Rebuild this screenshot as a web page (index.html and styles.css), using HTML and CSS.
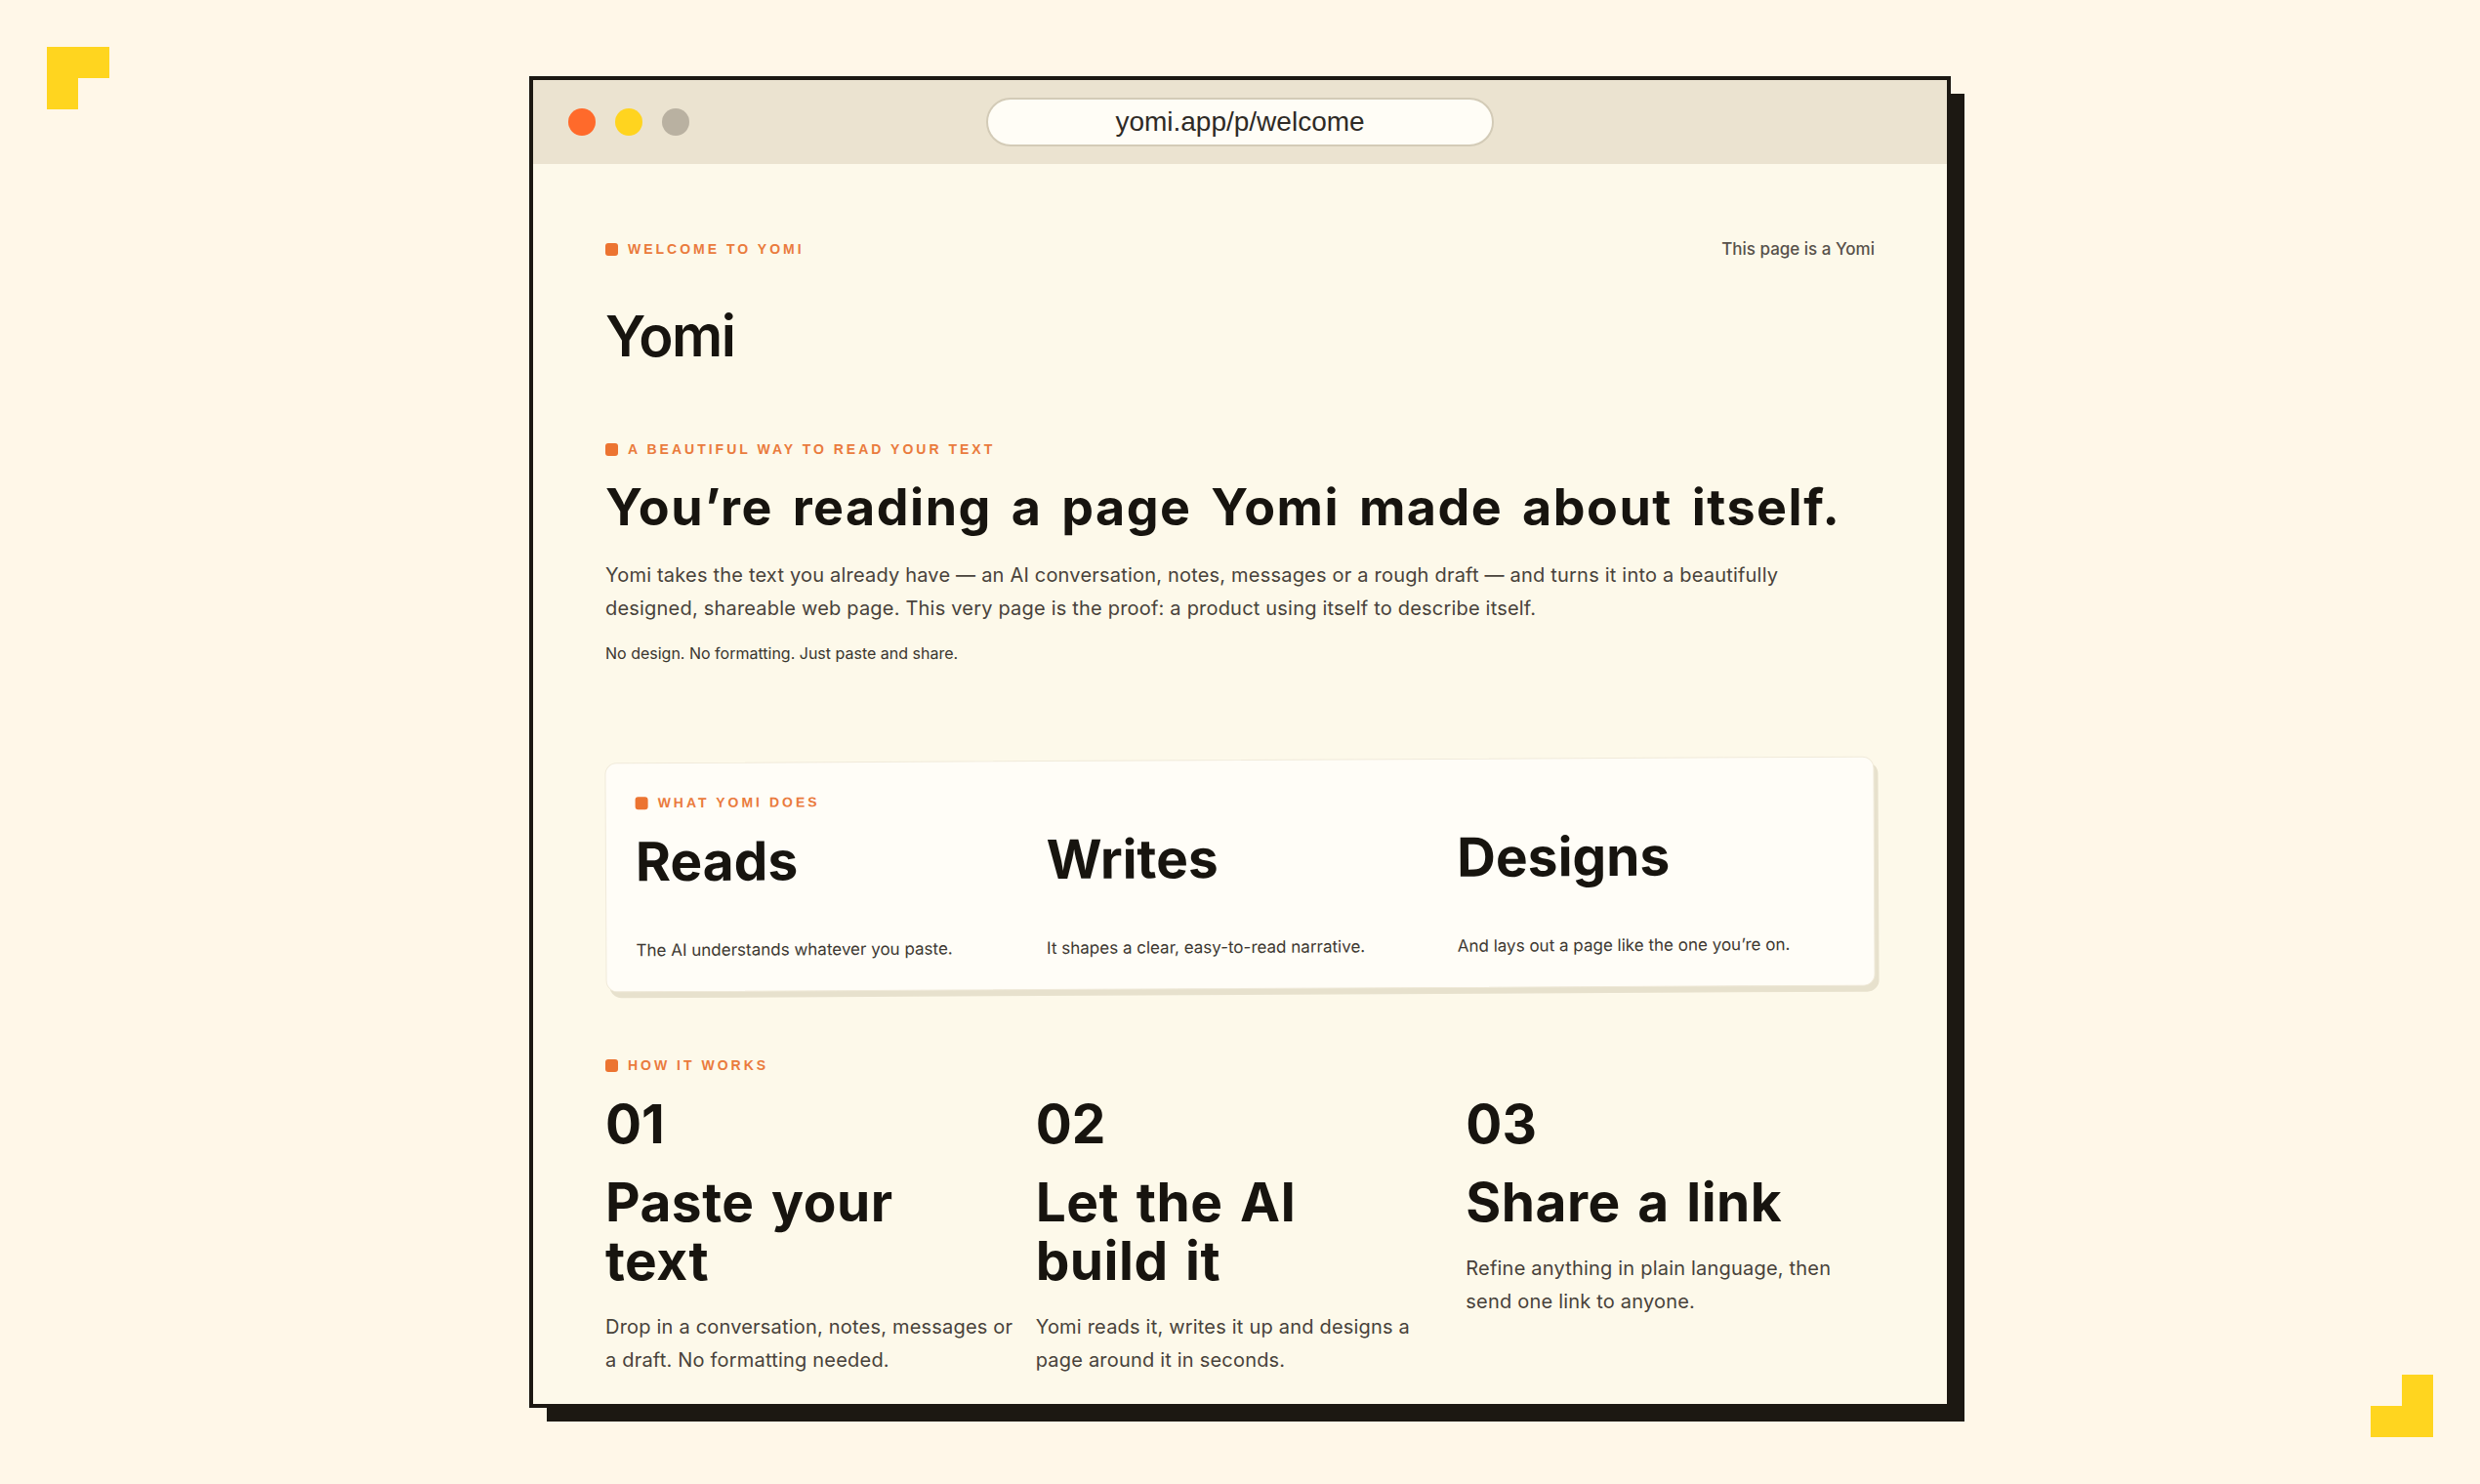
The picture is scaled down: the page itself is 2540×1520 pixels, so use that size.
FILE: index.html
```html
<!DOCTYPE html>
<html lang="en">
<head>
    <meta charset="UTF-8">
    <meta name="viewport" content="width=device-width, initial-scale=1.0">
    <title>Yomi — Welcome</title>
    <link rel="stylesheet" href="styles.css">
</head>
<body>
    <!-- Corner brand marks -->
    <div class="mark mark-top"></div>
    <div class="mark mark-bottom"></div>

    <div class="window">
        <div class="titlebar">
            <div class="dots">
                <span class="dot dot-red"></span>
                <span class="dot dot-yellow"></span>
                <span class="dot dot-grey"></span>
            </div>
            <div class="address">yomi.app/p/welcome</div>
        </div>

        <div class="page">
            <div class="page-top">
                <div class="eyebrow">Welcome to Yomi</div>
                <span class="page-note">This page is a Yomi</span>
            </div>

            <h1 class="brand">Yomi</h1>

            <!-- Intro -->
            <section class="intro">
                <div class="eyebrow">A beautiful way to read your text</div>
                <h2 class="intro-title">You’re reading a page Yomi made about itself.</h2>
                <p class="intro-text">
                    Yomi takes the text you already have — an AI conversation, notes, messages or a rough draft — and turns it into a beautifully designed, shareable web page. This very page is the proof: a product using itself to describe itself.
                </p>
                <p class="intro-aside">No design. No formatting. Just paste and share.</p>
            </section>

            <!-- What it does -->
            <section class="features">
                <div class="eyebrow">What Yomi does</div>
                <div class="features-grid">
                    <div class="feature">
                        <h3 class="feature-title">Reads</h3>
                        <p class="feature-text">The AI understands whatever you paste.</p>
                    </div>
                    <div class="feature">
                        <h3 class="feature-title">Writes</h3>
                        <p class="feature-text">It shapes a clear, easy-to-read narrative.</p>
                    </div>
                    <div class="feature">
                        <h3 class="feature-title">Designs</h3>
                        <p class="feature-text">And lays out a page like the one you’re on.</p>
                    </div>
                </div>
            </section>

            <!-- How it works -->
            <section class="steps">
                <div class="eyebrow">How it works</div>
                <div class="steps-grid">
                    <div class="step">
                        <div class="step-num">01</div>
                        <h3 class="step-title">Paste your text</h3>
                        <p class="step-text">Drop in a conversation, notes, messages or a draft. No formatting needed.</p>
                    </div>
                    <div class="step">
                        <div class="step-num">02</div>
                        <h3 class="step-title">Let the AI build it</h3>
                        <p class="step-text">Yomi reads it, writes it up and designs a page around it in seconds.</p>
                    </div>
                    <div class="step">
                        <div class="step-num">03</div>
                        <h3 class="step-title">Share a link</h3>
                        <p class="step-text">Refine anything in plain language, then send one link to anyone.</p>
                    </div>
                </div>
            </section>
        </div>
    </div>
</body>
</html>
```

FILE: styles.css
```css
* {
    margin: 0;
    padding: 0;
    box-sizing: border-box;
}

body {
    min-height: 1520px;
    position: relative;
    font-family: Inter, 'Noto Sans', sans-serif;
    background: #fff7e8;
    color: #17140f;
    overflow: hidden;
}

/* Yellow corner marks */
.mark {
    position: absolute;
    width: 64px;
    height: 64px;
    background: #ffd51f;
}

.mark-top {
    top: 48px;
    left: 48px;
    clip-path: polygon(0 0, 100% 0, 100% 50%, 50% 50%, 50% 100%, 0 100%);
}

.mark-bottom {
    right: 48px;
    bottom: 48px;
    clip-path: polygon(50% 0, 100% 0, 100% 100%, 0 100%, 0 50%, 50% 50%);
}

/* Browser frame */
.window {
    width: 1456px;
    height: 1364px;
    margin: 78px auto 0;
    border: 4px solid #1c1812;
    background: #fdf9ea;
    box-shadow: 16px 16px 0 -2px #1c1812;
    overflow: hidden;
}

.titlebar {
    height: 86px;
    padding: 0 36px;
    display: grid;
    grid-template-columns: 1fr auto 1fr;
    align-items: center;
    background: #ebe3d0;
}

.dots {
    display: flex;
    gap: 20px;
}

.dot {
    width: 28px;
    height: 28px;
    border-radius: 50%;
}

.dot-red { background: #ff6a2b; }
.dot-yellow { background: #ffd41f; }
.dot-grey { background: #b9b1a1; }

.address {
    width: 520px;
    height: 50px;
    display: flex;
    align-items: center;
    justify-content: center;
    border: 2px solid #d3cbb7;
    border-radius: 25px;
    background: #fffdf6;
    font-family: 'Liberation Sans', Arial, sans-serif;
    font-size: 28px;
    color: #2e2a25;
}

/* Page content */
.page {
    padding: 77px 74px 0;
}

.page-top {
    display: flex;
    justify-content: space-between;
    align-items: center;
}

.eyebrow {
    display: flex;
    align-items: center;
    gap: 10px;
    font-family: 'Liberation Sans', Arial, sans-serif;
    font-size: 14px;
    line-height: 16px;
    font-weight: 700;
    letter-spacing: 3px;
    text-transform: uppercase;
    color: #ea7b3d;
}

.eyebrow::before {
    content: "";
    width: 13px;
    height: 13px;
    border-radius: 3px;
    background: #ec7431;
}

.page-note {
    font-size: 17px;
    font-weight: 500;
    color: #57514a;
}

.brand {
    margin-top: 47px;
    font-size: 58px;
    line-height: 64px;
    font-weight: 600;
    letter-spacing: -1.5px;
}

.intro {
    margin-top: 76px;
}

.intro-title {
    margin-top: 22px;
    font-size: 52px;
    line-height: 60px;
    font-weight: 700;
    letter-spacing: 1.5px;
    word-spacing: 6px;
}

.intro-text {
    max-width: 1260px;
    margin-top: 22px;
    font-size: 20px;
    line-height: 34px;
    letter-spacing: 0.2px;
    color: #48423a;
}

.intro-aside {
    margin-top: 17px;
    font-size: 16px;
    line-height: 24px;
    color: #3a352e;
}

/* Feature card, tilted a touch */
.features {
    margin-top: 97px;
    padding: 32px 30px 29px;
    background: #fffdf7;
    border: 1px solid #f0eada;
    border-radius: 12px;
    box-shadow: 4px 6px 0 #e7e1cd;
    transform: rotate(-0.3deg);
}

.features-grid {
    display: grid;
    grid-template-columns: repeat(3, 1fr);
    gap: 24px;
    margin-top: 22px;
}

.feature-title {
    font-size: 55px;
    line-height: 60px;
    font-weight: 700;
}

.feature-text {
    margin-top: 49px;
    font-size: 17px;
    line-height: 25px;
    color: #3e3932;
}

/* Steps */
.steps {
    margin-top: 70px;
}

.steps-grid {
    display: grid;
    grid-template-columns: repeat(3, 1fr);
    gap: 22px;
    margin-top: 22px;
}

.step-num {
    font-size: 55px;
    line-height: 60px;
    font-weight: 700;
}

.step-title {
    max-width: 380px;
    margin-top: 20px;
    font-size: 55px;
    line-height: 60px;
    font-weight: 700;
    letter-spacing: 0.5px;
    word-spacing: 4px;
}

.step-text {
    margin-top: 21px;
    font-size: 20px;
    line-height: 34px;
    letter-spacing: 0.2px;
    color: #48423a;
}
```
